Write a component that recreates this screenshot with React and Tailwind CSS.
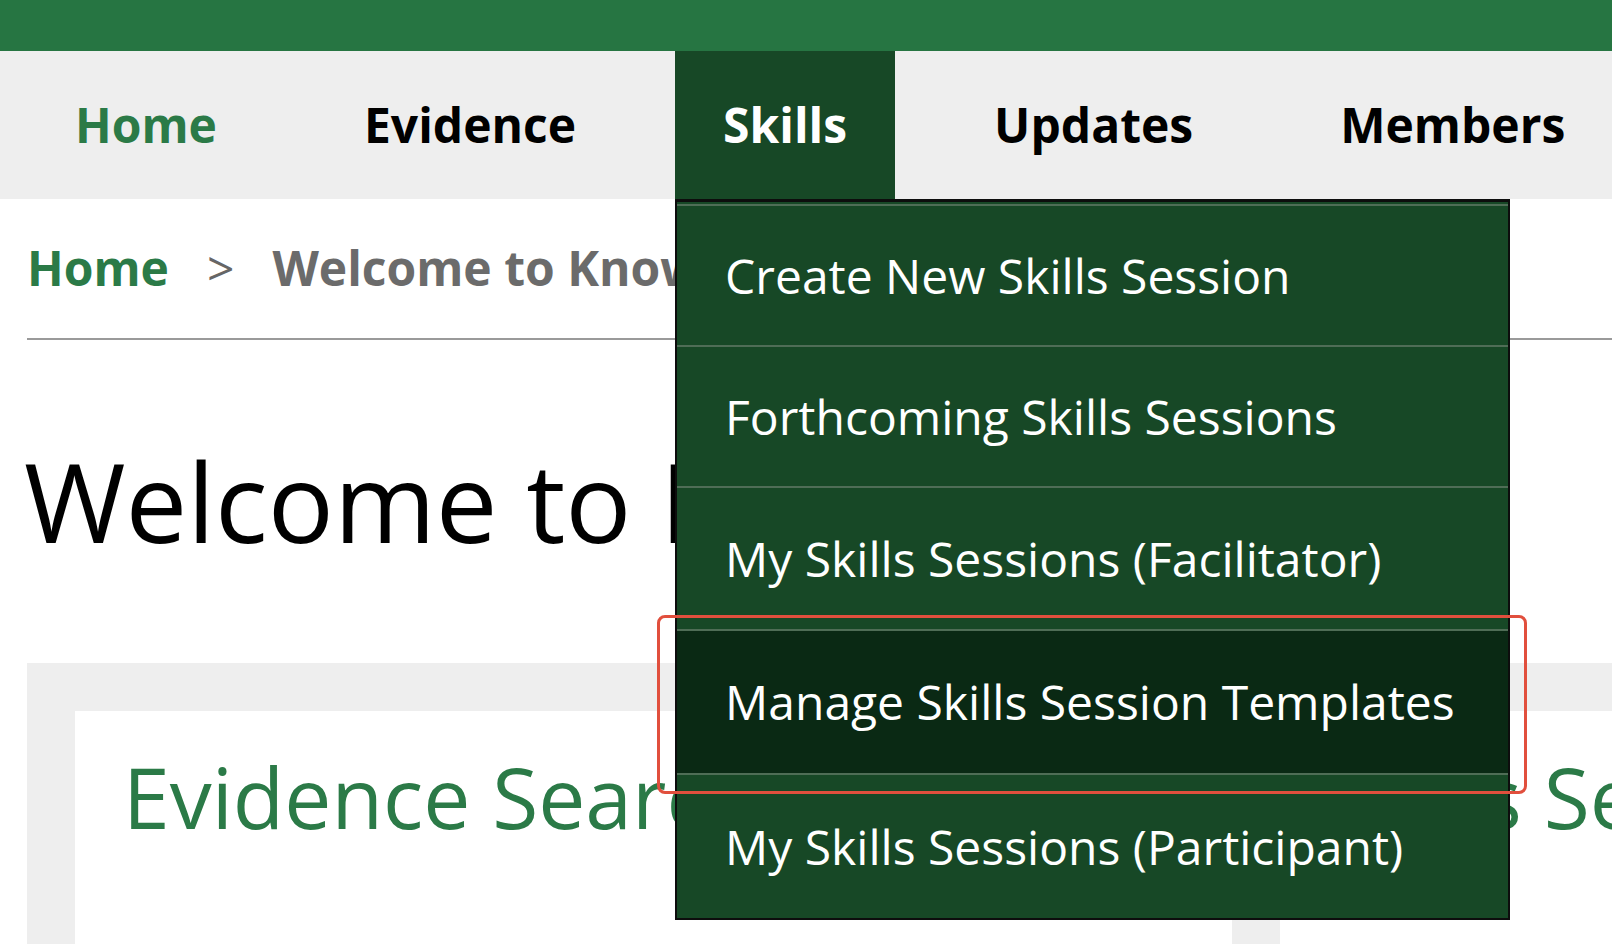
import React from "react";

const menu = [
  { label: "Create New Skills Session", h: "h-[141px]" },
  { label: "Forthcoming Skills Sessions", h: "h-[141px]" },
  { label: "My Skills Sessions (Facilitator)", h: "h-[143px]" },
  { label: "Manage Skills Session Templates", h: "h-[144px]" },
  { label: "My Skills Sessions (Participant)", h: "h-[145px]" },
];

function NavItem({ children, active, current, dropdown }) {
  return (
    <div
      className={`relative flex items-center px-12 text-[48px] font-bold leading-none
      ${active ? "bg-[#174826] text-white" : current ? "text-[#2b7a47]" : "text-black"}`}
    >
      {children}
      {dropdown}
    </div>
  );
}

function SkillsMenu() {
  return (
    <div className="absolute left-0 top-full z-10 w-[835px] border-2 border-t-[3px] border-[#0d0d0d] bg-[#174826]">
      {menu.map((item, i) => (
        <div
          key={item.label}
          className={`relative flex ${item.h} items-center border-t-2 border-[#4f6d56] pl-12 text-[48px] font-normal leading-none text-white
          ${i === 3 ? "bg-[#0a2914]" : ""} ${i === 0 ? "mt-[2px]" : ""}`}
        >
          {item.label}
          {i === 3 && (
            <div className="pointer-events-none absolute left-[-20px] right-[-19px] top-[-16px] bottom-[-21px] rounded-lg border-[3px] border-[#e14f3d]" />
          )}
        </div>
      ))}
    </div>
  );
}

export default function App() {
  return (
    <div
      className="relative h-[944px] w-[1612px] overflow-hidden bg-white"
      style={{ fontFamily: '"Open Sans", "Noto Sans", sans-serif' }}
    >
      <div className="h-[51px] bg-[#267542]" />

      <nav className="flex h-[148px] gap-[51px] bg-[#eeeeee] pl-[27px]">
        <NavItem current>Home</NavItem>
        <NavItem>Evidence</NavItem>
        <NavItem active dropdown={<SkillsMenu />}>
          Skills
        </NavItem>
        <NavItem>Updates</NavItem>
        <NavItem>Members</NavItem>
      </nav>

      <div className="ml-[27px] flex h-[141px] items-center gap-[38px] border-b-2 border-[#9a9a9a] pb-[2px] text-[48px] font-bold leading-none">
        <span className="text-[#2b7a47]">Home</span>
        <span className="font-normal text-[#666666]">&gt;</span>
        <span className="whitespace-nowrap text-[#6b6b6b]">Welcome to Knowledge Hub</span>
      </div>

      <h1 className="ml-[24px] mt-[105px] whitespace-nowrap text-[110px] font-normal leading-[110px] text-black">
        Welcome to Knowledge Hub
      </h1>

      <div className="ml-[27px] mt-[108px] flex gap-12 bg-[#eeeeee] p-12">
        <div className="h-[400px] w-[1157px] shrink-0 bg-white px-12 pt-[44px]">
          <h2 className="whitespace-nowrap text-[84px] font-normal leading-[84px] text-[#2b7a47]">
            Evidence Search
          </h2>
        </div>
        <div className="h-[400px] w-[900px] shrink-0 bg-white px-12 pt-[44px]">
          <h2 className="whitespace-nowrap text-[84px] font-normal leading-[84px] text-[#2b7a47]">
            Skills Sessions
          </h2>
        </div>
      </div>
    </div>
  );
}
